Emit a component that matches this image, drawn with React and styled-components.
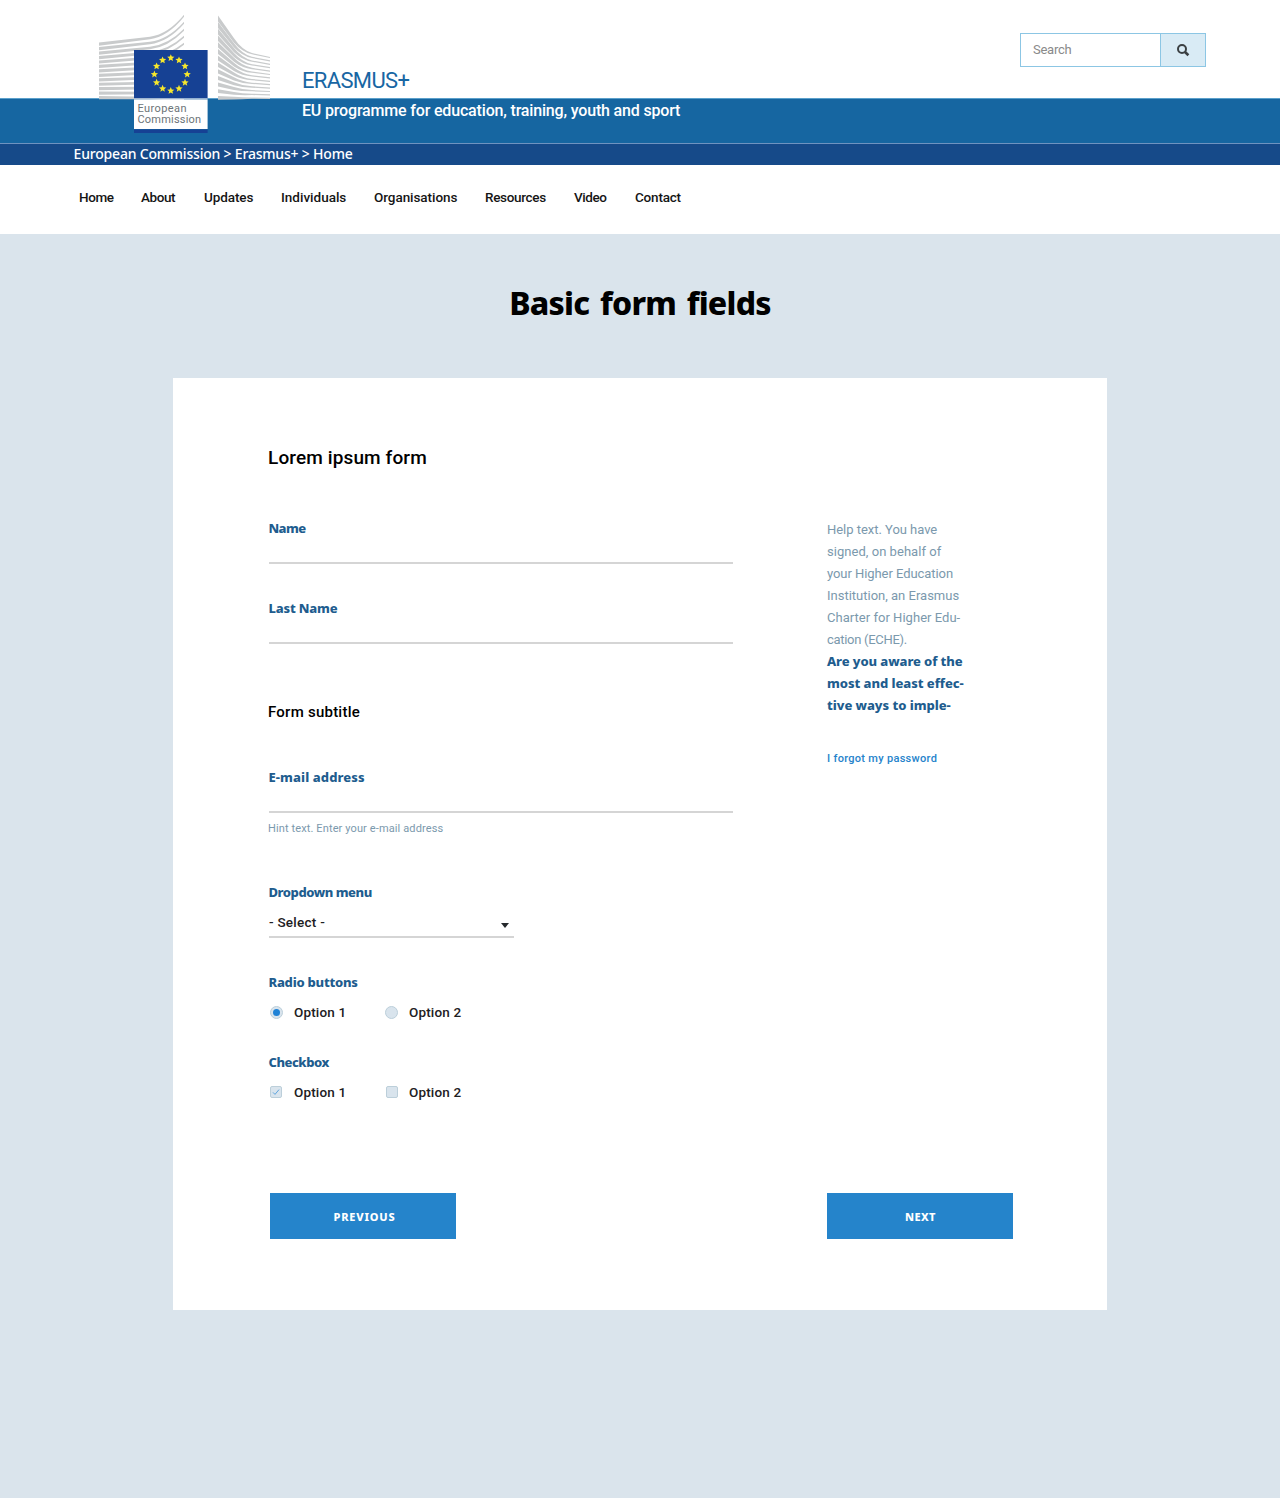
import React from "react";
import styled, { createGlobalStyle, css } from "styled-components";

const GlobalStyle = createGlobalStyle`
  * { box-sizing: border-box; }
  body {
    margin: 0;
    background: #dae4ec;
    font-family: Roboto, "Noto Sans", sans-serif;
    color: #1d2022;
  }
`;

const bold = css`
  font-family: "Noto Sans", sans-serif;
  font-weight: 800;
`;
const tracking = css`
  letter-spacing: ${(p) => p.$ls || 0}px;
`;

const Page = styled.div`
  width: 1280px;
  height: 1498px;
  overflow: hidden;
`;

/* ---------- header ---------- */
const Header = styled.header`
  position: relative;
  background: #fff;
`;
const TopBand = styled.div`
  display: flex;
  justify-content: space-between;
  align-items: flex-start;
  height: 98px;
  padding: 33px 74px 0 302px;
`;
const SiteName = styled.div`
  margin-top: 34px;
  font-size: 22px;
  line-height: 28px;
  letter-spacing: -0.65px;
  color: #1866a3;
`;
const Search = styled.div`
  display: flex;
  width: 186px;
  height: 34px;
  border: 1px solid #8cc6e4;
`;
const SearchInput = styled.input`
  width: 140px;
  padding: 0 0 2px 12px;
  border: 0;
  border-right: 1px solid #8cc6e4;
  outline: 0;
  background: #fff;
  font: 400 13px Roboto, sans-serif;
  letter-spacing: -0.25px;
  &::placeholder { color: #8a8a8a; opacity: 1; }
`;
const SearchButton = styled.button`
  display: flex;
  flex: 1;
  align-items: center;
  justify-content: center;
  padding: 0;
  border: 0;
  background: #d9ebf5;
`;
const BlueBand = styled.div`
  height: 45px;
  padding: 1px 0 0 302px;
  border-top: 1px solid #5ba0cb;
  background: #1666a1;
  color: #fff;
  font-size: 16px;
  font-weight: 500;
  line-height: 22px;
  letter-spacing: -0.17px;
`;
const Breadcrumb = styled.div`
  height: 22px;
  padding-left: 73.6px;
  border-top: 1px solid #6f93c0;
  background: #164a89;
  color: #fff;
  font: 500 14px/20px "Noto Sans", sans-serif;
  letter-spacing: -0.2px;
`;
const LogoSvg = styled.svg`
  position: absolute;
  left: 94px;
  top: 10px;
`;
const Nav = styled.nav`
  display: flex;
  height: 69px;
  padding: 22px 0 0 79px;
`;
const NavItem = styled.a`
  flex: none;
  width: ${(p) => p.$w}px;
  font-size: 13.5px;
  font-weight: 500;
  line-height: 20px;
  color: #151515;
  ${tracking}
`;

/* ---------- main ---------- */
const Title = styled.h1`
  margin: 46px 0 53px;
  text-align: center;
  font: 800 32px/45px "Noto Sans", sans-serif;
  letter-spacing: -0.75px;
  word-spacing: 3px;
  color: #000;
`;
const Card = styled.main`
  display: flex;
  flex-direction: column;
  width: 934px;
  height: 932px;
  margin: 0 auto;
  padding: 68px 94px 0 95px;
  background: #fff;
`;
const FormTitle = styled.h2`
  margin: 0 0 48px;
  font-size: 19px;
  font-weight: 500;
  line-height: 24px;
  letter-spacing: 0.12px;
  color: #000;
`;
const Columns = styled.div`
  display: flex;
  justify-content: space-between;
  height: 675px;
`;
const Fields = styled.div`
  width: 465px;
`;
const Field = styled.div`
  margin-bottom: ${(p) => p.$gap}px;
`;
const Label = styled.div`
  ${bold}
  padding-left: 0.5px;
  font-size: 13px;
  line-height: 20px;
  color: #205c8e;
  ${tracking}
`;
const Line = styled.input`
  display: block;
  width: 464px;
  height: 26px;
  margin-left: 1px;
  padding: 0;
  border: 0;
  border-bottom: 2px solid #d5d5d5;
  outline: 0;
  background: transparent;
`;
const Subtitle = styled.h3`
  margin: 0 0 45px;
  font-size: 15px;
  font-weight: 500;
  line-height: 20px;
  letter-spacing: 0.24px;
  color: #000;
`;
const Hint = styled.div`
  margin-top: 8px;
  font-size: 11px;
  line-height: 16px;
  letter-spacing: 0.12px;
  color: #7b99ad;
`;
const Select = styled.div`
  display: flex;
  align-items: center;
  justify-content: space-between;
  width: 245px;
  height: 36px;
  margin-left: 1px;
  padding: 5px 5px 0 0;
  border-bottom: 2px solid #d5d5d5;
  font-size: 13.5px;
  font-weight: 500;
  letter-spacing: 0.25px;
`;
const Caret = styled.span`
  margin-top: 7px;
  border: 4px solid transparent;
  border-top: 5px solid #25292c;
  border-bottom: 0;
`;
const Options = styled.div`
  display: flex;
  gap: ${(p) => p.$gap || 0}px;
  padding: 10px 0 0 2px;
`;
const Option = styled.label`
  display: flex;
  align-items: center;
  width: 115px;
  height: 20px;
  font-size: 13.5px;
  font-weight: 500;
  letter-spacing: 0.15px;
`;
const Radio = styled.span`
  display: flex;
  align-items: center;
  justify-content: center;
  width: 13px;
  height: 13px;
  margin-right: 11px;
  border: 1px solid #bccfda;
  border-radius: 50%;
  background: #d9e4ed;
  &::after {
    content: "";
    width: 7px;
    height: 7px;
    border-radius: 50%;
    background: ${(p) => (p.$on ? "#1f82d6" : "transparent")};
  }
`;
const Check = styled.span`
  display: flex;
  align-items: center;
  justify-content: center;
  width: 12px;
  height: 12px;
  margin-right: ${(p) => p.$space}px;
  margin-bottom: 1px;
  border: 1px solid #bccfda;
  border-radius: 2px;
  background: #d9e4ed;
`;
const Help = styled.aside`
  width: 187px;
  padding: 1px 0 0 1px;
`;
const HelpLine = styled.div`
  font-size: 13px;
  line-height: 22px;
  color: #7b99ad;
  white-space: nowrap;
  ${tracking}
`;
const HelpStrong = styled.div`
  ${bold}
  margin-top: -1px;
  font-size: 13px;
  line-height: 22px;
  color: #205c8e;
  white-space: nowrap;
`;
const StrongLine = styled.div`
  ${tracking}
`;
const HelpLink = styled.a`
  display: block;
  margin-top: 33px;
  font-size: 11px;
  font-weight: 500;
  line-height: 20px;
  letter-spacing: 0.3px;
  color: #2583cb;
`;
const Actions = styled.div`
  display: flex;
  justify-content: space-between;
  padding-left: 2px;
`;
const Button = styled.button`
  width: 186px;
  height: 46px;
  padding: 0 0 0 ${(p) => p.$shift}px;
  border: 0;
  background: #2584cb;
  color: #fff;
  ${bold}
  font-size: 11px;
  ${tracking}
`;

const steps = Array.from({ length: 13 }, (_, k) => k);

const leftStripe = (k) => {
  const a = 44.2 + 4.45 * k, b = 38 + 5 * k, c = 35.5 + 5.3 * k, d = 15.5 + 7 * k;
  return `M99 ${a - 1.6}L150 ${b - 1.3}Q168 ${c - 1.1} 184 ${d - 0.7}V${d + 1.3}Q168 ${c + 1.2} 150 ${b + 1.3}L99 ${a + 1.6}Z`;
};
const rightStripe = (k) => {
  const t = 3 - 0.1 * k;
  const a = 18.4 + 6.62 * k, b = 40.5 + 4.8 * k, c = 51 + 3.95 * k, d = 53.7 + 3.7 * k, e = 57.5 + 3.4 * k;
  return `M218 ${a - t}L234 ${b - t * 0.75}Q242 ${c - 1} 252 ${d - 0.65}L270 ${e - 0.6}V${e + 0.6}L252 ${d + 0.65}Q242 ${c + 1} 234 ${b + t * 0.75}L218 ${a + t}Z`;
};
const star = (cx, cy, r) =>
  Array.from({ length: 10 }, (_, i) => {
    const q = i % 2 ? r * 0.45 : r;
    const t = (i * Math.PI) / 5;
    return `${(cx + q * Math.sin(t)).toFixed(2)},${(cy - q * Math.cos(t)).toFixed(2)}`;
  }).join(" ");

function Logo() {
  return (
    <LogoSvg width="180" height="126" viewBox="94 10 180 126">
      <g fill="#c9cbcc">
        {steps.map((k) => <path key={k} d={leftStripe(k)} />)}
        {steps.map((k) => <path key={k} d={rightStripe(k)} />)}
      </g>
      <rect x="134" y="50" width="73.6" height="48.4" fill="#164194" />
      <g fill="#f6e72c">
        {Array.from({ length: 12 }, (_, i) => (
          <polygon
            key={i}
            points={star(170.8 + 16.4 * Math.sin((i * Math.PI) / 6), 74.4 - 16.4 * Math.cos((i * Math.PI) / 6), 3.8)}
          />
        ))}
      </g>
      <rect x="134" y="98.2" width="73.6" height="1.3" fill="#a9bdd8" />
      <rect x="134" y="99.5" width="73.6" height="29.5" fill="#fff" />
      <rect x="134" y="129.5" width="73.6" height="3.5" fill="#164194" />
      <g fill="#6c7478" fontFamily="Roboto, sans-serif" fontSize="11">
        <text x="137.4" y="112.3" letterSpacing="0.43">European</text>
        <text x="137.4" y="123.4" letterSpacing="0.22">Commission</text>
      </g>
    </LogoSvg>
  );
}

const navItems = [
  ["Home", 62, -0.4], ["About", 63, -0.4], ["Updates", 77, -0.09], ["Individuals", 93, 0.0],
  ["Organisations", 111, -0.06], ["Resources", 89, -0.33], ["Video", 61, -0.45], ["Contact", 60, -0.2],
];
const helpLines = [
  ["Help text. You have", -0.03], ["signed, on behalf of", 0.04], ["your Higher Education", -0.06],
  ["Institution, an Erasmus", 0], ["Charter for Higher Edu-", 0.03], ["cation (ECHE).", -0.3],
];
const strongLines = [
  ["Are you aware of the", -0.08], ["most and least effec-", -0.05], ["tive ways to imple-", -0.04],
];

export default function App() {
  return (
    <Page>
      <GlobalStyle />
      <Header>
        <TopBand>
          <SiteName>ERASMUS+</SiteName>
          <Search>
            <SearchInput placeholder="Search" />
            <SearchButton aria-label="Search">
              <svg width="14" height="14" viewBox="0 0 14 14" fill="none" stroke="#3b4043">
                <circle cx="6" cy="6" r="4" strokeWidth="2" />
                <path d="M9 9l3.4 3.2" strokeWidth="2.6" />
              </svg>
            </SearchButton>
          </Search>
        </TopBand>
        <BlueBand>EU programme for education, training, youth and sport</BlueBand>
        <Breadcrumb>European Commission &gt; Erasmus+ &gt; Home</Breadcrumb>
        <Logo />
        <Nav>
          {navItems.map(([t, w, ls]) => <NavItem key={t} $w={w} $ls={ls}>{t}</NavItem>)}
        </Nav>
      </Header>

      <Title>Basic form fields</Title>

      <Card>
        <FormTitle>Lorem ipsum form</FormTitle>
        <Columns>
          <Fields>
            <Field $gap={34}>
              <Label $ls={-0.6}>Name</Label>
              <Line />
            </Field>
            <Field $gap={58}>
              <Label $ls={-0.18}>Last Name</Label>
              <Line />
            </Field>
            <Subtitle>Form subtitle</Subtitle>
            <Field $gap={45}>
              <Label $ls={0.1}>E-mail address</Label>
              <Line />
              <Hint>Hint text. Enter your e-mail address</Hint>
            </Field>
            <Field $gap={34}>
              <Label $ls={-0.45}>Dropdown menu</Label>
              <Select>- Select -<Caret /></Select>
            </Field>
            <Field $gap={30}>
              <Label $ls={-0.24}>Radio buttons</Label>
              <Options>
                <Option><Radio $on />Option 1</Option>
                <Option><Radio />Option 2</Option>
              </Options>
            </Field>
            <Field $gap={0}>
              <Label $ls={-0.46}>Checkbox</Label>
              <Options $gap={1}>
                <Option>
                  <Check $space={12}>
                    <svg width="8" height="8" viewBox="0 0 8 8" fill="none" stroke="#5fa5de" strokeWidth="1">
                      <path d="M1 4.4L3 6.4L7 1.6" />
                    </svg>
                  </Check>
                  Option 1
                </Option>
                <Option><Check $space={11} />Option 2</Option>
              </Options>
            </Field>
          </Fields>
          <Help>
            {helpLines.map(([t, ls]) => <HelpLine key={t} $ls={ls}>{t}</HelpLine>)}
            <HelpStrong>
              {strongLines.map(([t, ls]) => <StrongLine key={t} $ls={ls}>{t}</StrongLine>)}
            </HelpStrong>
            <HelpLink>I forgot my password</HelpLink>
          </Help>
        </Columns>
        <Actions>
          <Button $ls={0.8} $shift={3}>PREVIOUS</Button>
          <Button $ls={0.4} $shift={1}>NEXT</Button>
        </Actions>
      </Card>
    </Page>
  );
}
